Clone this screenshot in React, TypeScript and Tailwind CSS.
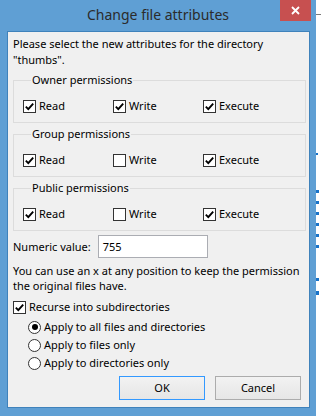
import React from "react";

const font = { fontFamily: '"Noto Sans", "Segoe UI", sans-serif' };

function Check({ checked }: { checked: boolean }) {
  return (
    <span className="flex h-[13px] w-[13px] shrink-0 items-center justify-center border border-[#333] bg-white">
      {checked && (
        <svg width="11" height="11" viewBox="0 0 11 11">
          <path d="M1.8 5.6 L4.3 8.1 L9.2 2.6" fill="none" stroke="#000" strokeWidth="1.9" />
        </svg>
      )}
    </span>
  );
}

function Radio({ checked }: { checked: boolean }) {
  return (
    <span className="flex h-[13px] w-[13px] shrink-0 items-center justify-center rounded-full border border-[#333] bg-white">
      {checked && <span className="h-[6px] w-[6px] rounded-full bg-black" />}
    </span>
  );
}

function CheckItem({ label, checked }: { label: string; checked: boolean }) {
  return (
    <div className="flex h-4 w-[90px] items-center gap-[3px]">
      <Check checked={checked} />
      <span>{label}</span>
    </div>
  );
}

function Group({ title, perms, first }: { title: string; perms: [boolean, boolean, boolean]; first?: boolean }) {
  return (
    <fieldset className={first ? "mt-[4px] border border-[#dcdcdc] pb-[8px] pl-[9px] pt-[10px]" : "mt-[3px] border border-[#dcdcdc] pb-[8px] pl-[9px] pt-[10px]"}>
      <legend className="ml-[8px] px-[1px] leading-4">{title}</legend>
      <div className="flex">
        <CheckItem label="Read" checked={perms[0]} />
        <CheckItem label="Write" checked={perms[1]} />
        <CheckItem label="Execute" checked={perms[2]} />
      </div>
    </fieldset>
  );
}

function RadioItem({ label, checked }: { label: string; checked: boolean }) {
  return (
    <div className="flex h-[18px] items-center gap-[3px] pl-[15px]">
      <Radio checked={checked} />
      <span>{label}</span>
    </div>
  );
}

export default function App() {
  return (
    <div className="flex h-[416px] w-[321px] overflow-hidden bg-white text-[11px] leading-4 text-black" style={font}>
      <div className="flex h-full w-[316px] shrink-0 flex-col bg-[#5f9fd4]">
        <div className="grid h-[31px] grid-cols-[1fr_auto_1fr]">
          <div />
          <div className="pt-[5px] text-[14px] leading-5 text-[#2b2b2b]">Change file attributes</div>
          <div className="flex justify-end pr-[5px]">
            <div className="flex h-[21px] w-[31px] items-center justify-center bg-[#c75050]">
              <svg width="9" height="9" viewBox="0 0 9 9">
                <path d="M1 1 L8 8 M8 1 L1 8" stroke="#fff" strokeWidth="1.8" />
              </svg>
            </div>
          </div>
        </div>
        <div className="ml-[7px] flex h-[377px] w-[303px] flex-col border border-[#3f82bb] bg-[#f0f0f0] pl-[5px] pr-[3px] pt-[4px]">
          <p>
            Please select the new attributes for the directory
            <br />
            "thumbs".
          </p>
          <Group title="Owner permissions" perms={[true, true, true]} first />
          <Group title="Group permissions" perms={[true, false, true]} />
          <Group title="Public permissions" perms={[true, false, true]} />
          <div className="mt-[4px] flex items-center gap-[7px]">
            <span>Numeric value:</span>
            <div className="flex h-[23px] w-[110px] items-center border border-[#abadb3] bg-white pl-[4px]">755</div>
          </div>
          <p className="mt-[5px] leading-[15px]">
            You can use an x at any position to keep the permission
            <br />
            the original files have.
          </p>
          <div className="mt-[6px] flex h-4 items-center gap-[3px]">
            <Check checked />
            <span>Recurse into subdirectories</span>
          </div>
          <div className="mt-[3px] flex flex-col">
            <RadioItem label="Apply to all files and directories" checked />
            <RadioItem label="Apply to files only" checked={false} />
            <RadioItem label="Apply to directories only" checked={false} />
          </div>
          <div className="mr-[5px] mt-[4px] flex justify-end gap-[10px]">
            <button className="h-[24px] w-[86px] border border-[#3399ff] bg-gradient-to-b from-[#f2f2f2] to-[#e6e6e6]">OK</button>
            <button className="h-[24px] w-[86px] border border-[#acacac] bg-gradient-to-b from-[#f2f2f2] to-[#e6e6e6]">Cancel</button>
          </div>
        </div>
      </div>
      <div className="flex flex-1 flex-col">
        <div className="mt-[14px] h-px w-full bg-[#7a7a7a]" />
        <div className="mt-[138px] h-[2px] w-[2px] bg-[#1a73c8]" />
        <div className="mt-[35px] flex flex-col gap-[8px]">
          <div className="h-[3px] w-[3px] bg-[#1a73c8]" />
          <div className="h-[3px] w-[3px] bg-[#1a73c8]" />
          <div className="h-[3px] w-[3px] bg-[#1a73c8]" />
          <div className="h-[3px] w-[3px] bg-[#1a73c8]" />
          <div className="h-[3px] w-[3px] bg-[#1a73c8]" />
          <div className="h-[3px] w-[3px] bg-[#1a73c8]" />
        </div>
        <div className="mt-[30px] h-[3px] w-[3px] bg-[#1a73c8]" />
        <div className="mt-[10px] h-[4px] w-[3px] bg-[#1a73c8]" />
      </div>
    </div>
  );
}
